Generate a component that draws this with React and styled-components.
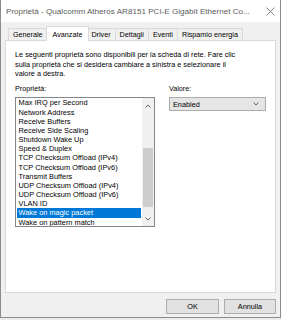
import React from "react";
import styled, { createGlobalStyle } from "styled-components";

const Global = createGlobalStyle`
  html, body { margin: 0; padding: 0; background: #ececec; }
  * { box-sizing: border-box; }
  body { font-family: "Liberation Sans", Arial, sans-serif; }
`;

const Window = styled.div`
  width: 281px;
  height: 318px;
  border: 1px solid #8c8c8c;
  border-top: none;
  display: flex;
  flex-direction: column;
  background: #f0f0f0;
`;

const TitleBar = styled.div`
  height: 22px;
  background: #ffffff;
  display: flex;
  align-items: center;
  justify-content: space-between;
  padding: 0 5px 0 5px;
`;

const Title = styled.div`
  font-size: 8.1px;
  color: #5c5c5c;
  white-space: nowrap;
`;

const Close = styled.svg`
  width: 9px;
  height: 9px;
  margin-right: 0;
`;

const Body = styled.div`
  flex: 1;
  display: flex;
  flex-direction: column;
  padding: 4px 4px 0 4px;
`;

const TabRow = styled.div`
  display: flex;
  align-items: flex-end;
  height: 14px;
  padding-left: 3px;
`;

const Tab = styled.div`
  position: relative;
  height: ${(p) => (p.$active ? "15px" : "12px")};
  margin: ${(p) => (p.$active ? "0 -2px -1px -2px" : "0 0 0 -1px")};
  z-index: ${(p) => (p.$active ? 2 : 1)};
  padding: 0 ${(p) => (p.$active ? "6px" : "4px")};
  border: 1px solid #d9d9d9;
  border-bottom: none;
  background: ${(p) => (p.$active ? "#ffffff" : "#f0f0f0")};
  font-size: 7.2px;
  color: #000;
  display: flex;
  align-items: ${(p) => (p.$active ? "flex-start" : "center")};
  padding-top: ${(p) => (p.$active ? "3px" : "0")};
  white-space: nowrap;
  &:first-child { margin-left: 0; }
`;

const Panel = styled.div`
  height: 253px;
  background: #ffffff;
  border: 1px solid #d9d9d9;
  padding: 9px 9px 0 9px;
  display: flex;
  flex-direction: column;
`;

const Description = styled.p`
  margin: 0;
  font-size: 7.3px;
  line-height: 9.6px;
  color: #000;
  white-space: nowrap;
`;

const Columns = styled.div`
  display: flex;
  gap: 14px;
  margin-top: 5px;
`;

const Column = styled.div`
  display: flex;
  flex-direction: column;
  width: ${(p) => p.$width}px;
`;

const Label = styled.div`
  font-size: 7.2px;
  line-height: 9.6px;
  color: #000;
  margin-bottom: 4px;
`;

const ListBox = styled.div`
  width: 140px;
  height: 130px;
  border: 1px solid #828790;
  display: flex;
`;

const Items = styled.div`
  flex: 1;
  padding: 0 1px 0 1px;
  overflow: hidden;
`;

const Item = styled.div`
  height: 9.18px;
  line-height: 9.18px;
  font-size: 7.4px;
  padding-left: 1.5px;
  white-space: nowrap;
  background: ${(p) => (p.$selected ? "#0078d7" : "transparent")};
  color: ${(p) => (p.$selected ? "#ffffff" : "#000000")};
`;

const ScrollBar = styled.div`
  width: 12px;
  background: #f0f0f0;
  display: flex;
  flex-direction: column;
  align-items: stretch;
`;

const Arrow = styled.div`
  height: 15px;
  display: flex;
  align-items: center;
  justify-content: center;
`;

const Track = styled.div`
  flex: 1;
  display: flex;
  flex-direction: column;
  justify-content: flex-end;
  padding: 0 1px 4px 1px;
`;

const Thumb = styled.div`
  height: 59px;
  background: #cdcdcd;
`;

const Select = styled.div`
  width: 97px;
  height: 14px;
  border: 1px solid #adadad;
  background: #e5e5e5;
  display: flex;
  align-items: center;
  justify-content: space-between;
  padding: 0 6px 0 3px;
  font-size: 7.3px;
  color: #000;
`;

const Buttons = styled.div`
  display: flex;
  justify-content: flex-end;
  gap: 5px;
  margin-top: 6px;
`;

const Button = styled.div`
  width: ${(p) => p.$width}px;
  height: 15px;
  border: 1px solid #adadad;
  background: #e1e1e1;
  font-size: 7.3px;
  color: #000;
  display: flex;
  align-items: center;
  justify-content: center;
`;

const Chevron = ({ up }) => (
  <svg width="6" height="4" viewBox="0 0 6 4">
    <polyline
      points={up ? "0.5,3.5 3,1 5.5,3.5" : "0.5,0.5 3,3 5.5,0.5"}
      fill="none"
      stroke="#606060"
      strokeWidth="1"
    />
  </svg>
);

const items = [
  "Max IRQ per Second",
  "Network Address",
  "Receive Buffers",
  "Receive Side Scaling",
  "Shutdown Wake Up",
  "Speed & Duplex",
  "TCP Checksum Offload (IPv4)",
  "TCP Checksum Offload (IPv6)",
  "Transmit Buffers",
  "UDP Checksum Offload (IPv4)",
  "UDP Checksum Offload (IPv6)",
  "VLAN ID",
  "Wake on magic packet",
  "Wake on pattern match",
];

const tabs = ["Generale", "Avanzate", "Driver", "Dettagli", "Eventi", "Rispamio energia"];

export default function App() {
  return (
    <>
      <Global />
      <Window>
        <TitleBar>
          <Title>Proprietà - Qualcomm Atheros AR8151 PCI-E Gigabit Ethernet Co...</Title>
          <Close viewBox="0 0 9 9">
            <line x1="0.5" y1="0.5" x2="8.5" y2="8.5" stroke="#6a6a6a" strokeWidth="0.8" />
            <line x1="8.5" y1="0.5" x2="0.5" y2="8.5" stroke="#6a6a6a" strokeWidth="0.8" />
          </Close>
        </TitleBar>
        <Body>
          <TabRow>
            {tabs.map((t) => (
              <Tab key={t} $active={t === "Avanzate"}>
                {t}
              </Tab>
            ))}
          </TabRow>
          <Panel>
            <Description>
              Le seguenti proprietà sono disponibili per la scheda di rete. Fare clic
              <br />
              sulla proprietà che si desidera cambiare a sinistra e selezionare il
              <br />
              valore a destra.
            </Description>
            <Columns>
              <Column $width={140}>
                <Label>Proprietà:</Label>
                <ListBox>
                  <Items>
                    {items.map((it) => (
                      <Item key={it} $selected={it === "Wake on magic packet"}>
                        {it}
                      </Item>
                    ))}
                  </Items>
                  <ScrollBar>
                    <Arrow>
                      <Chevron up />
                    </Arrow>
                    <Track>
                      <Thumb />
                    </Track>
                    <Arrow>
                      <Chevron />
                    </Arrow>
                  </ScrollBar>
                </ListBox>
              </Column>
              <Column $width={97}>
                <Label>Valore:</Label>
                <Select>
                  <span>Enabled</span>
                  <Chevron />
                </Select>
              </Column>
            </Columns>
          </Panel>
          <Buttons>
            <Button $width={53}>OK</Button>
            <Button $width={52}>Annulla</Button>
          </Buttons>
        </Body>
      </Window>
    </>
  );
}
